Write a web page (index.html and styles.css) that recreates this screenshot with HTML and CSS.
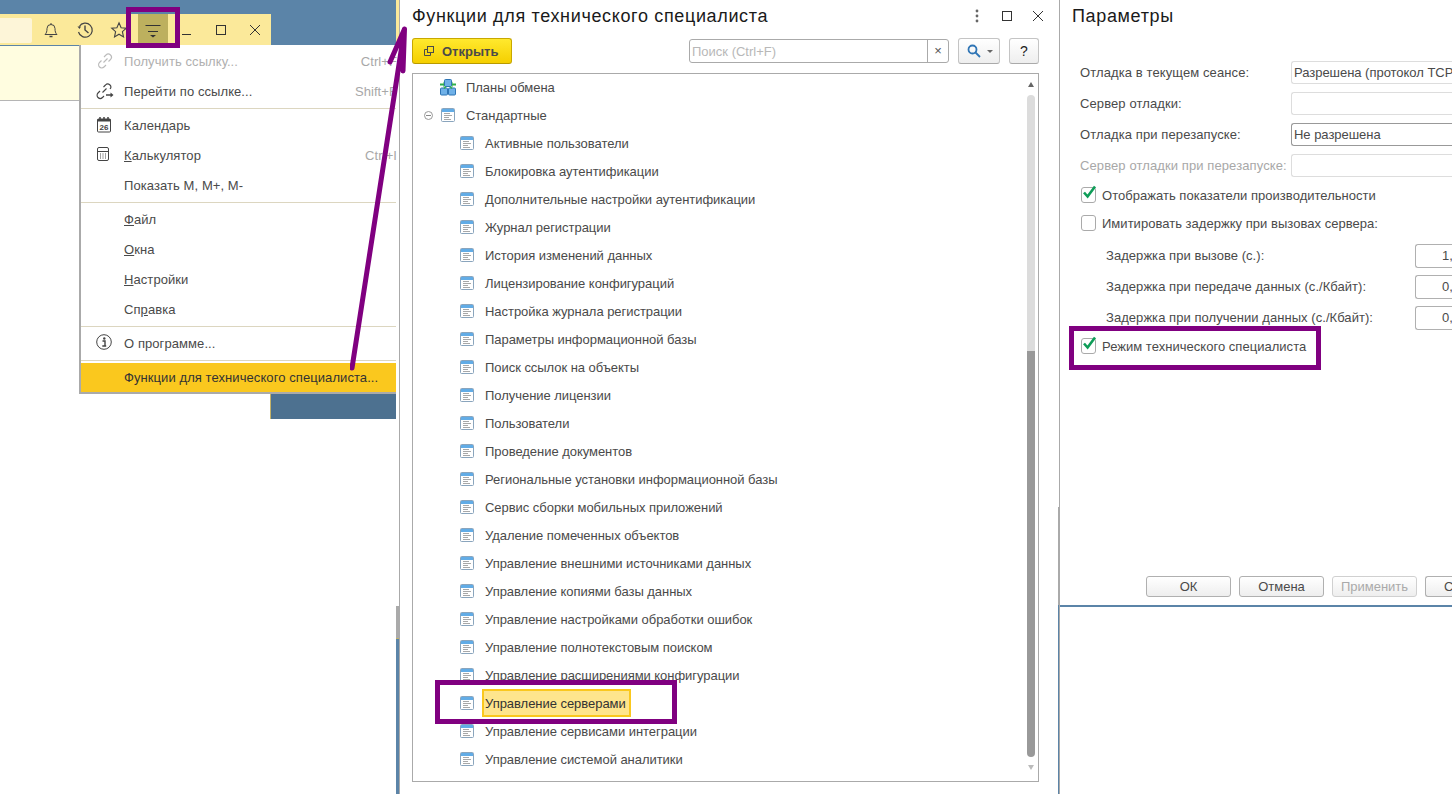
FILE: index.html
```html
<!DOCTYPE html>
<html lang="ru">
<head>
<meta charset="utf-8">
<title>Функции для технического специалиста</title>
<link rel="stylesheet" href="styles.css">
</head>
<body>
<svg class="defs" width="0" height="0" aria-hidden="true">
  <symbol id="form" viewBox="0 0 14 14">
    <rect x=".5" y=".5" width="13" height="13" rx="1" fill="#fff" stroke="#8aa5bd"/>
    <rect x="1" y="1" width="12" height="3" fill="#62ace6"/>
    <path d="M3 5.500h6M3 7.500h8M3 9.500h5M3 11.500h7" stroke="#a8a8a8" stroke-width="1"/>
  </symbol>
  <symbol id="check" viewBox="0 0 16 16">
    <path d="M3 7.500 6.600 11.500 14 1.500" fill="none" stroke="#0f9d58" stroke-width="2.600"/>
  </symbol>
</svg>
<div class="screen">
  <section class="left">
    <header class="topbar">
      <div class="winbar">
        <div class="winsearch"></div>
        <div class="winicons">
          <span class="wi"><svg width="18" height="18" viewBox="0 0 18 18" fill="none" stroke="#444"><path d="M3 13.500c1.500-1.500 2-3 2-6a4 4 0 0 1 8 0c0 3 .5 4.500 2 6z"/><path d="M7.500 15.500h3" stroke-width="1.500"/><path d="M9 2v1.500"/></svg></span>
          <span class="wi"><svg width="18" height="18" viewBox="0 0 18 18" fill="none" stroke="#444" stroke-width="1.200"><path d="M3.300 5.500A7 7 0 1 1 2.500 11"/><path d="M1.500 5.500h3.500v0L3.500 8z" fill="#444" stroke="none"/><path d="M9 4.500V9l3.500 3" stroke-width="1.400"/></svg></span>
          <span class="wi"><svg width="18" height="18" viewBox="0 0 18 18" fill="none" stroke="#444" stroke-width="1.100"><path d="M9 1.800 11.100 6.700 16.300 7.200 12.400 10.700 13.500 15.900 9 13.200 4.500 15.900 5.600 10.700 1.700 7.200 6.900 6.700z"/></svg></span>
          <span class="wi wi-on"><svg width="16" height="18" viewBox="0 0 16 18"><path d="M0.500 5.500h15M3 11.500h10" stroke="#333" fill="none"/><path d="M5 15h6l-3 2.500z" fill="#333"/></svg></span>
          <span class="wi"><svg width="12" height="14" viewBox="0 0 12 14"><path d="M1 11.500h9" stroke="#333" fill="none"/></svg></span>
          <span class="wi"><svg width="12" height="12" viewBox="0 0 12 12"><rect x="1.500" y="1.500" width="9" height="9" fill="none" stroke="#333"/></svg></span>
          <span class="wi"><svg width="12" height="12" viewBox="0 0 12 12"><path d="M1 1l10 10M11 1 1 11" stroke="#333" fill="none"/></svg></span>
        </div>
      </div>
    </header>
    <div class="pale"></div>
    <div class="blueblock"></div>
    <div class="stub"></div>
  </section>

  <section class="center">
    <div class="titlerow">
      <h1 class="title">Функции для технического специалиста</h1>
      <div class="titleicons">
        <svg class="dots" width="6" height="14" viewBox="0 0 6 14"><g fill="#666"><circle cx="3" cy="2" r="1.400"/><circle cx="3" cy="7" r="1.400"/><circle cx="3" cy="12" r="1.400"/></g></svg>
        <svg width="10" height="10" viewBox="0 0 10 10"><rect x=".5" y=".5" width="9" height="9" fill="none" stroke="#333"/></svg>
        <svg width="12" height="12" viewBox="0 0 12 12"><path d="M1 1l10 10M11 1 1 11" stroke="#333" fill="none"/></svg>
      </div>
    </div>
    <div class="cmdbar">
      <button class="btn-open"><svg width="12" height="12" viewBox="0 0 12 12" fill="none" stroke="#4a4a4a"><rect x="4.500" y="1.500" width="6" height="6"/><path d="M4.500 4.500h-3v6h6v-3"/></svg><span>Открыть</span></button>
      <div class="spacer"></div>
      <div class="search"><span class="search-text">Поиск (Ctrl+F)</span><span class="search-x">×</span></div>
      <button class="tool tool-find"><svg width="14" height="14" viewBox="0 0 14 14" fill="none" stroke="#2f75b5" stroke-width="1.800"><circle cx="5.500" cy="5.500" r="4"/><path d="M8.500 8.500l4.500 4.500"/></svg><i class="caret"></i></button>
      <button class="tool tool-help">?</button>
    </div>
    <div class="tree">
      <ul class="rows">
        <li class="row lvl0"><svg class="ic-plan" width="16" height="17" viewBox="0 0 16 17"><path d="M0 4.500h3.500v-2l2 3-2 3v-2H0zM16 4.500h-3.500v-2l-2 3 2 3v-2H16z" fill="#2fb04a"/><rect x="4.500" y=".5" width="7" height="7" rx="1" fill="#6fb1e8" stroke="#2f75b5"/><rect x=".5" y="9" width="7" height="7" rx="1" fill="#6fb1e8" stroke="#2f75b5"/><rect x="8.500" y="9" width="7" height="7" rx="1" fill="#6fb1e8" stroke="#2f75b5"/><path d="M6 7.500l-2 2M10 7.500l2 2" stroke="#2fb04a" stroke-width="1.500"/></svg><span class="lbl">Планы обмена</span></li>
        <li class="row lvl0"><i class="minus"></i><svg class="ic" width="14" height="14"><use href="#form"/></svg><span class="lbl">Стандартные</span></li>
        <li class="row"><svg class="ic" width="14" height="14"><use href="#form"/></svg><span class="lbl">Активные пользователи</span></li>
        <li class="row"><svg class="ic" width="14" height="14"><use href="#form"/></svg><span class="lbl">Блокировка аутентификации</span></li>
        <li class="row"><svg class="ic" width="14" height="14"><use href="#form"/></svg><span class="lbl">Дополнительные настройки аутентификации</span></li>
        <li class="row"><svg class="ic" width="14" height="14"><use href="#form"/></svg><span class="lbl">Журнал регистрации</span></li>
        <li class="row"><svg class="ic" width="14" height="14"><use href="#form"/></svg><span class="lbl">История изменений данных</span></li>
        <li class="row"><svg class="ic" width="14" height="14"><use href="#form"/></svg><span class="lbl">Лицензирование конфигураций</span></li>
        <li class="row"><svg class="ic" width="14" height="14"><use href="#form"/></svg><span class="lbl">Настройка журнала регистрации</span></li>
        <li class="row"><svg class="ic" width="14" height="14"><use href="#form"/></svg><span class="lbl">Параметры информационной базы</span></li>
        <li class="row"><svg class="ic" width="14" height="14"><use href="#form"/></svg><span class="lbl">Поиск ссылок на объекты</span></li>
        <li class="row"><svg class="ic" width="14" height="14"><use href="#form"/></svg><span class="lbl">Получение лицензии</span></li>
        <li class="row"><svg class="ic" width="14" height="14"><use href="#form"/></svg><span class="lbl">Пользователи</span></li>
        <li class="row"><svg class="ic" width="14" height="14"><use href="#form"/></svg><span class="lbl">Проведение документов</span></li>
        <li class="row"><svg class="ic" width="14" height="14"><use href="#form"/></svg><span class="lbl">Региональные установки информационной базы</span></li>
        <li class="row"><svg class="ic" width="14" height="14"><use href="#form"/></svg><span class="lbl">Сервис сборки мобильных приложений</span></li>
        <li class="row"><svg class="ic" width="14" height="14"><use href="#form"/></svg><span class="lbl">Удаление помеченных объектов</span></li>
        <li class="row"><svg class="ic" width="14" height="14"><use href="#form"/></svg><span class="lbl">Управление внешними источниками данных</span></li>
        <li class="row"><svg class="ic" width="14" height="14"><use href="#form"/></svg><span class="lbl">Управление копиями базы данных</span></li>
        <li class="row"><svg class="ic" width="14" height="14"><use href="#form"/></svg><span class="lbl">Управление настройками обработки ошибок</span></li>
        <li class="row"><svg class="ic" width="14" height="14"><use href="#form"/></svg><span class="lbl">Управление полнотекстовым поиском</span></li>
        <li class="row"><svg class="ic" width="14" height="14"><use href="#form"/></svg><span class="lbl">Управление расширениями конфигурации</span></li>
        <li class="row"><svg class="ic" width="14" height="14"><use href="#form"/></svg><span class="lbl lbl-sel">Управление серверами</span></li>
        <li class="row"><svg class="ic" width="14" height="14"><use href="#form"/></svg><span class="lbl">Управление сервисами интеграции</span></li>
        <li class="row"><svg class="ic" width="14" height="14"><use href="#form"/></svg><span class="lbl">Управление системой аналитики</span></li>
      </ul>
      <div class="scroll">
        <i class="arr-up"></i>
        <div class="thumb-light"></div>
        <div class="thumb-dark"></div>
        <i class="arr-down"></i>
      </div>
    </div>
  </section>

  <section class="right">
    <div class="right-top">
      <h2 class="title">Параметры</h2>
      <div class="form">
        <div class="frow"><span class="flabel">Отладка в текущем сеансе:</span><span class="field">Разрешена (протокол TCP</span></div>
        <div class="frow"><span class="flabel">Сервер отладки:</span><span class="field"></span></div>
        <div class="frow"><span class="flabel">Отладка при перезапуске:</span><span class="field field-dark">Не разрешена</span></div>
        <div class="frow"><span class="flabel flabel-off">Сервер отладки при перезапуске:</span><span class="field"></span></div>
        <div class="crow crow-first"><span class="cb"><svg width="16" height="16"><use href="#check"/></svg></span><span>Отображать показатели производительности</span></div>
        <div class="crow"><span class="cb"></span><span>Имитировать задержку при вызовах сервера:</span></div>
        <div class="drow drow-first"><span class="dlabel">Задержка при вызове (с.):</span><span class="num">1,</span></div>
        <div class="drow"><span class="dlabel">Задержка при передаче данных (с./Кбайт):</span><span class="num">0,</span></div>
        <div class="drow"><span class="dlabel">Задержка при получении данных (с./Кбайт):</span><span class="num">0,</span></div>
        <div class="crow crow-last"><span class="cb"><svg width="16" height="16"><use href="#check"/></svg></span><span>Режим технического специалиста</span></div>
      </div>
      <div class="actions">
        <button class="act">ОК</button>
        <button class="act">Отмена</button>
        <button class="act act-off">Применить</button>
        <button class="act act-cut">С</button>
      </div>
    </div>
    <div class="blueline"></div>
  </section>

  <div class="menu">
    <div class="mi mi-off"><svg class="mic" width="18" height="18" viewBox="0 0 18 18" fill="none" stroke="#bbb" stroke-width="1.100"><path d="M7.500 10.500l4-4"/><path d="M8 5l2-2a3 3 0 0 1 4.500 4.500L12.500 9.500"/><path d="M10 13l-2 2a3 3 0 0 1-4.500-4.500L5.500 8.500"/></svg><span class="mt">Получить ссылку...</span><span class="ms">Ctrl+F</span></div>
    <div class="mi"><svg class="mic" width="18" height="18" viewBox="0 0 18 18" fill="none" stroke="#444" stroke-width="1.100"><path d="M6.500 10.500l4-4"/><path d="M7.500 5l2-2a3 3 0 0 1 4.500 4"/><path d="M8 14l-1.500 1.500a3 3 0 0 1-4.500-4.500L4 9"/><path d="M10 13h6" stroke-width="1.500"/><path d="M14.500 10.500 17.500 13l-3 2.500z" fill="#444" stroke="none"/></svg><span class="mt">Перейти по ссылке...</span><span class="ms">Shift+F</span></div>
    <hr class="msep">
    <div class="mi"><svg class="mic" width="16" height="17" viewBox="0 0 16 17"><rect x="1.500" y="3" width="13" height="13" rx="1" fill="#fff" stroke="#444"/><path d="M1.500 3h13v2.500h-13z" fill="#444"/><path d="M4 1v3M8 1v3M12 1v3" stroke="#444" stroke-width="1.500"/><text x="8" y="14" text-anchor="middle" class="calnum">26</text></svg><span class="mt">Календарь</span></div>
    <div class="mi"><svg class="mic" width="14" height="16" viewBox="0 0 14 16"><rect x="1.500" y="1.500" width="11" height="13" rx="1.500" fill="none" stroke="#444"/><path d="M1.500 5.500h11" stroke="#444"/><path d="M4 8h1M6.500 8h1M9 8h1M4 10h1M6.500 10h1M9 10h1M4 12h1M6.500 12h1M9 12h1" stroke="#444"/></svg><span class="mt"><u>К</u>алькулятор</span><span class="ms ms-calc">Ctrl+I</span></div>
    <div class="mi"><span class="mt">Показать M, M+, M-</span></div>
    <hr class="msep">
    <div class="mi"><span class="mt"><u>Ф</u>айл</span></div>
    <div class="mi"><span class="mt"><u>О</u>кна</span></div>
    <div class="mi"><span class="mt"><u>Н</u>астройки</span></div>
    <div class="mi"><span class="mt">Сп<u>р</u>авка</span></div>
    <hr class="msep">
    <div class="mi"><svg class="mic" width="16" height="16" viewBox="0 0 16 16"><circle cx="8" cy="8" r="7.300" fill="none" stroke="#444"/><circle cx="8.300" cy="4.500" r="1.200" fill="#444"/><path d="M6.500 7h2.500v5h1.200M6.300 12h3.700" fill="none" stroke="#444" stroke-width="1.400"/></svg><span class="mt">О программе...</span></div>
    <hr class="msep msep-tight">
    <div class="mi mi-on"><span class="mt">Функции для технического специалиста...</span></div>
  </div>

  <div class="mark mark-menu"></div>
  <div class="mark mark-tree"></div>
  <div class="mark mark-check"></div>
  <svg class="arrow" width="70" height="350" viewBox="0 0 70 350"><path d="M2 347 54.500 8M40 41 54.500 8 53 50" fill="none" stroke="#800080" stroke-width="5" stroke-linecap="round"/></svg>
</div>
</body>
</html>
```

FILE: styles.css
```css
* { box-sizing: border-box; }
html, body { margin: 0; padding: 0; background: #fff; }
body { font-family: "Liberation Sans", Arial, sans-serif; font-size: 13px; color: #4a4a4a; }
.defs { display: block; height: 0; }
button { font-family: inherit; margin: 0; padding: 0; }
ul { list-style: none; margin: 0; padding: 0; }

.screen { position: relative; display: flex; width: 1452px; height: 794px; overflow: hidden; }

/* left window */
.left { width: 400px; flex: none; border-right: 1px solid #aaa; display: flex; flex-direction: column; }
.topbar { height: 46px; width: 396px; background: #5b84a8; padding-top: 14px; flex: none; position: relative; }
.topbar::after { content: ""; position: absolute; top: 0; right: -3px; width: 3px; height: 46px; background: #fbe99a; }
.winbar { width: 271px; height: 31px; background: #fbe99a; display: flex; }
.winsearch { width: 32px; height: 25px; margin-top: 4px; background: #fdf5d8; border-radius: 0 2px 2px 0; flex: none; }
.winicons { display: flex; margin-left: 2px; flex: none; }
.wi { width: 34px; height: 30px; padding-top: 1px; display: flex; align-items: center; justify-content: center; flex: none; }
.wi-on { width: 30px; margin: 0 2px; padding-top: 0; background: #bdb05e; }
.pale { width: 79px; height: 55px; background: #fffde0; border-bottom: 1px solid #b5b5b5; flex: none; }
.blueblock { width: 126px; height: 26px; margin: 292px 0 0 270px; background: #4d7190; border-left: 1px solid #c4b268; flex: none; }
.stub { width: 3px; margin: 187px 0 0 396px; flex: 1; background: linear-gradient(#aaa 0 32px, #c4b268 32px 33px, #5b84a8 33px); }

/* center window */
.center { position: relative; width: 660px; flex: none; border-right: 1px solid #aaa; padding-left: 12px; display: flex; flex-direction: column; }
.center::after { content: ""; position: absolute; right: 0; top: 507px; width: 1px; height: 287px; background: linear-gradient(#aaa 0 98px, #5b84a8 98px); }
.title { margin: 0; font-size: 18px; font-weight: 400; color: #1a1a1a; letter-spacing: .65px; line-height: 32px; }
.titlerow { display: flex; height: 32px; align-items: center; }
.titleicons { margin-left: auto; margin-right: 15px; display: flex; align-items: center; gap: 20px; }
.dots { margin-right: 2px; }
.cmdbar { display: flex; height: 27px; margin-top: 6px; width: 627px; align-items: flex-start; }
.btn-open { width: 100px; height: 26px; border: 1px solid #c8a800; border-bottom-color: #b89a00; border-radius: 3px; background: linear-gradient(#ffe92e, #f5cf00); display: flex; align-items: center; padding-left: 10px; gap: 7px; font-size: 13px; font-weight: 700; color: #4a4a4a; }
.spacer { flex: 1; }
.search { width: 260px; height: 24px; margin-top: 1px; border: 1px solid #aaa; border-radius: 3px; display: flex; align-items: center; }
.search-text { flex: 1; padding-left: 2px; color: #b8b8b8; }
.search-x { width: 21px; height: 22px; line-height: 21px; text-align: center; border-left: 1px solid #aaa; color: #555; font-size: 13px; }
.tool { height: 26px; border: 1px solid #c4c4c4; border-bottom-color: #aaa; border-radius: 3px; background: linear-gradient(#fff, #eee); }
.tool-find { width: 42px; margin-left: 9px; display: flex; align-items: center; padding-left: 8px; gap: 6px; }
.caret { width: 0; height: 0; border: 3px solid transparent; border-top: 3px solid #666; border-bottom: 0; }
.tool-help { width: 30px; margin-left: 9px; font-size: 14px; color: #222; }
.tree { position: relative; width: 627px; height: 709px; margin-top: 8px; border: 1px solid #aaa; display: flex; flex: none; }
.rows { flex: 1; }
.row { height: 28px; display: flex; align-items: center; padding-left: 47px; color: #4a4a4a; letter-spacing: -.04px; }
.row:first-child { height: 27px; }
.row .ic { flex: none; margin-right: 11px; }
.lvl0 { padding-left: 0; }
.ic-plan { margin-left: 27px; margin-right: 10px; flex: none; }
.minus { width: 9px; height: 9px; margin: 0 8px 0 11px; border: 1px solid #999; border-radius: 50%; position: relative; flex: none; }
.minus::after { content: ""; position: absolute; left: 1px; right: 1px; top: 3px; height: 1px; background: #888; }
.lbl { white-space: nowrap; }
.lbl-sel { margin-left: -3px; height: 28px; line-height: 26px; background: #fee58d; border: 2px solid #fac81e; padding: 0 3px 0 1px; color: #333; }
.scroll { width: 8px; margin-right: 3px; display: flex; flex-direction: column; align-items: center; padding-top: 8px; }
.arr-up { width: 0; height: 0; border: 3px solid transparent; border-bottom: 5px solid #666; border-top: 0; margin-bottom: 8px; }
.thumb-light { width: 8px; height: 256px; background: #dcdcdc; border-radius: 4px 4px 0 0; }
.thumb-dark { width: 8px; height: 406px; background: #999; border-radius: 0 0 4px 4px; }
.arr-down { width: 0; height: 0; border: 3px solid transparent; border-top: 5px solid #bbb; border-bottom: 0; margin-top: 8px; }

/* right window */
.right { flex: none; width: 392px; }
.right-top { height: 605px; padding-left: 12px; display: flex; flex-direction: column; }
.form { margin-top: 25px; margin-left: 8px; }
.frow { display: flex; height: 31px; align-items: center; }
.flabel { width: 211px; white-space: nowrap; flex: none; letter-spacing: .1px; }
.flabel-off { color: #a8a8a8; }
.field { display: block; width: 161px; height: 23px; line-height: 21px; padding-left: 2px; border: 1px solid #ddd; border-right: 0; border-radius: 3px 0 0 3px; white-space: nowrap; flex: none; color: #4a4a4a; letter-spacing: -.03px; }
.field-dark { border-color: #999; }
.crow { display: flex; align-items: center; height: 28px; gap: 6px; white-space: nowrap; padding-left: 1px; letter-spacing: .03px; }
.cb { width: 15px; height: 16px; border: 1px solid #aaa; border-radius: 3px; position: relative; flex: none; }
.cb svg { position: absolute; left: -1px; top: -3px; }
.drow { display: flex; height: 31px; align-items: center; padding-left: 26px; letter-spacing: .05px; }
.drow-first { margin-top: 3px; }
.dlabel { width: 309px; white-space: nowrap; flex: none; }
.num { display: block; width: 37px; height: 24px; line-height: 22px; border: 1px solid #b0b0b0; border-right: 0; border-radius: 3px 0 0 3px; padding-left: 26px; flex: none; letter-spacing: 0; }
.crow-last { margin-top: -1px; }
.actions { display: flex; gap: 8px; margin-top: auto; margin-bottom: 8px; margin-left: 74px; flex: none; }
.act { width: 85px; height: 21px; flex: none; border: 1px solid #b0b0b0; border-radius: 3px; background: linear-gradient(#fff, #eee); font-size: 13px; color: #4a4a4a; }
.act-off { color: #aaa; border-color: #d0d0d0; }
.act-cut { width: 27px; text-align: left; padding-left: 18px; border-right: 0; border-radius: 3px 0 0 3px; }
.blueline { height: 2px; background: #5b84a8; margin-left: -2px; }

/* popup menu */
.menu { position: absolute; left: 79px; top: 45px; width: 317px; height: 349px; background: #fff; border: 2px solid #aaa; border-top: 0; border-right: 0; padding-top: 1px; }
.mi { height: 30px; display: flex; align-items: center; position: relative; padding-left: 43px; letter-spacing: .08px; white-space: nowrap; color: #4a4a4a; }
.mic { position: absolute; left: 15px; top: 6px; }
.mt { flex: none; }
.ms { position: absolute; right: -1px; top: 8px; color: #a8a8a8; }
.mi-off { color: #b0b0b0; }
.mi-on { background: #fac81e; height: 29px; color: #333; }
.msep { height: 1px; margin: 2px 0 1px; border: 0; background: #dcd6c0; }
.msep-tight { margin: 2px 0 2px; }
.calnum { font: 700 8px "Liberation Sans", sans-serif; fill: #444; }

/* annotations drawn over the screenshot */
.mark { position: absolute; border: 5px solid #800080; }
.mark-menu { left: 126px; top: 7px; width: 54px; height: 41px; }
.mark-tree { left: 435px; top: 680px; width: 242px; height: 44px; }
.mark-check { left: 1069px; top: 326px; width: 252px; height: 44px; }
.arrow { position: absolute; left: 350px; top: 21px; }
```
